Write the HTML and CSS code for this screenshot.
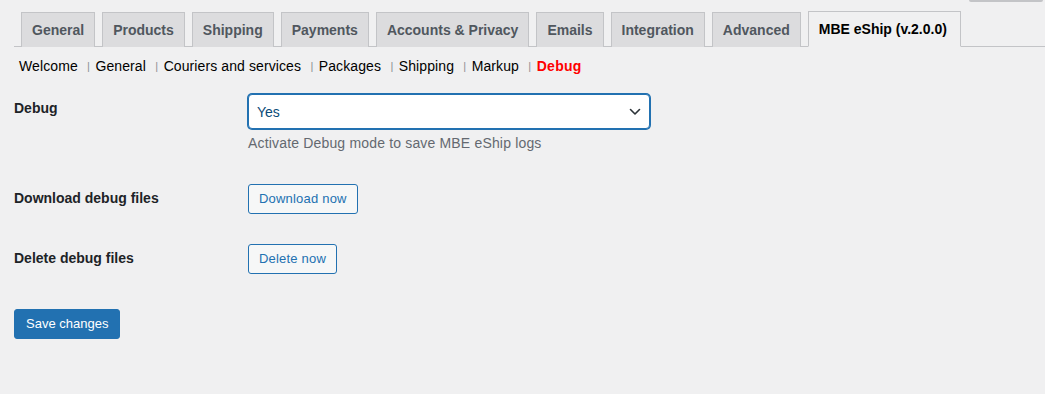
FILE: index.html
```html
<!DOCTYPE html>
<html lang="en">
<head>
<meta charset="utf-8">
<title>MBE eShip - Debug</title>
<link rel="stylesheet" href="styles.css">
</head>
<body>
<div class="screen-meta-tab"></div>
<div class="wrap">
  <nav class="nav-tab-wrapper">
    <a class="nav-tab">General</a>
    <a class="nav-tab">Products</a>
    <a class="nav-tab">Shipping</a>
    <a class="nav-tab">Payments</a>
    <a class="nav-tab">Accounts &amp; Privacy</a>
    <a class="nav-tab">Emails</a>
    <a class="nav-tab">Integration</a>
    <a class="nav-tab">Advanced</a>
    <a class="nav-tab nav-tab-active">MBE eShip (v.2.0.0)</a>
  </nav>
  <ul class="subsubsub">
    <li><a>Welcome</a><span class="sep">|</span></li>
    <li><a>General</a><span class="sep">|</span></li>
    <li><a>Couriers and services</a><span class="sep">|</span></li>
    <li><a>Packages</a><span class="sep">|</span></li>
    <li><a>Shipping</a><span class="sep">|</span></li>
    <li><a>Markup</a><span class="sep">|</span></li>
    <li><a class="current">Debug</a></li>
  </ul>
  <form class="form">
    <div class="row row-first">
      <label class="label">Debug</label>
      <div class="field">
        <div class="select-wrap">
          <select class="select">
            <option>Yes</option>
            <option>No</option>
          </select>
          <svg class="chevron" width="12" height="8" viewBox="0 0 12 8"><path d="M1.5 1.5 L6 6 L10.5 1.5" fill="none" stroke="#2c3338" stroke-width="1.6" stroke-linecap="round" stroke-linejoin="round"/></svg>
        </div>
        <p class="description">Activate Debug mode to save MBE eShip logs</p>
      </div>
    </div>
    <div class="row">
      <label class="label">Download debug files</label>
      <div class="field"><button type="button" class="button">Download now</button></div>
    </div>
    <div class="row">
      <label class="label">Delete debug files</label>
      <div class="field"><button type="button" class="button">Delete now</button></div>
    </div>
    <div class="submit">
      <button type="button" class="button-primary">Save changes</button>
    </div>
  </form>
</div>
</body>
</html>
```

FILE: styles.css
```css
* { box-sizing: border-box; }
html, body { margin: 0; padding: 0; }
body {
  background: #f0f0f1;
  font-family: "Liberation Sans", Arial, sans-serif;
  font-size: 14px;
  color: #1d2327;
  position: relative;
  height: 394px;
  overflow: hidden;
}
.screen-meta-tab {
  position: absolute;
  top: 0;
  left: 969px;
  width: 74px;
  height: 2px;
  background: #c3c4c7;
  border-radius: 0 0 3px 3px;
}
.wrap { padding: 0 0 0 14px; }
.nav-tab-wrapper {
  display: flex;
  align-items: flex-end;
  padding-top: 11px;
  border-bottom: 1px solid #c3c4c7;
}
.nav-tab {
  margin-left: 7px;
  margin-bottom: -1px;
  padding: 5px 10px;
  border: 1px solid #c3c4c7;
  border-bottom: none;
  background: #dcdcde;
  color: #50575e;
  font-weight: 600;
  font-size: 14px;
  line-height: 24px;
  white-space: nowrap;
  height: 35px;
}
.nav-tab-active {
  background: #f0f0f1;
  color: #000;
  height: 36px;
  padding: 5px 13px 5px 10px;
  border-bottom: 1px solid #f0f0f1;
}
.subsubsub {
  list-style: none;
  margin: 7px 0 0 5px;
  padding: 0;
  display: flex;
  font-size: 14px;
  line-height: 24px;
  letter-spacing: 0.1px;
}
.subsubsub a { color: #000; }
.subsubsub .sep {
  color: #8c8f94;
  font-size: 11px;
  margin: 0 5.4px 0 9.3px;
  position: relative;
  top: -1px;
}
.subsubsub .current { color: #f00; font-weight: 700; letter-spacing: 0.3px; }
.form { margin-top: 15px; }
.row { display: flex; margin-bottom: 30px; }
.row-first { margin-bottom: 31px; }
.label {
  width: 234px;
  flex: none;
  padding-top: 4px;
  font-weight: 700;
  line-height: 20px;
  color: #1d2327;
}
.field { display: flex; flex-direction: column; align-items: flex-start; }
.select-wrap { position: relative; width: 402px; height: 35px; }
.select {
  appearance: none;
  -webkit-appearance: none;
  width: 402px;
  height: 35px;
  margin: 0;
  padding: 0 30px 0 8px;
  border: 1px solid #2271b1;
  box-shadow: 0 0 0 1px #2271b1;
  border-radius: 4px;
  background: #fff;
  color: #0a4b78;
  font-family: "Liberation Sans", Arial, sans-serif;
  font-size: 14px;
  outline: none;
}
.chevron {
  position: absolute;
  right: 9px;
  top: 14px;
  pointer-events: none;
}
.description {
  margin: 4px 0 0 0;
  color: #646970;
  font-size: 14px;
  line-height: 20px;
  letter-spacing: 0.17px;
}
.button {
  height: 30px;
  padding: 0 10px;
  border: 1px solid #2271b1;
  border-radius: 3px;
  background: #f6f7f7;
  color: #2271b1;
  font-family: "Liberation Sans", Arial, sans-serif;
  font-size: 13px;
  line-height: 28px;
  letter-spacing: 0.2px;
  cursor: pointer;
}
.submit { padding-top: 5px; }
.button-primary {
  height: 30px;
  padding: 0 11px;
  border: 1px solid #2271b1;
  border-radius: 3px;
  background: #2271b1;
  color: #fff;
  font-family: "Liberation Sans", Arial, sans-serif;
  font-size: 13px;
  line-height: 28px;
}
```
